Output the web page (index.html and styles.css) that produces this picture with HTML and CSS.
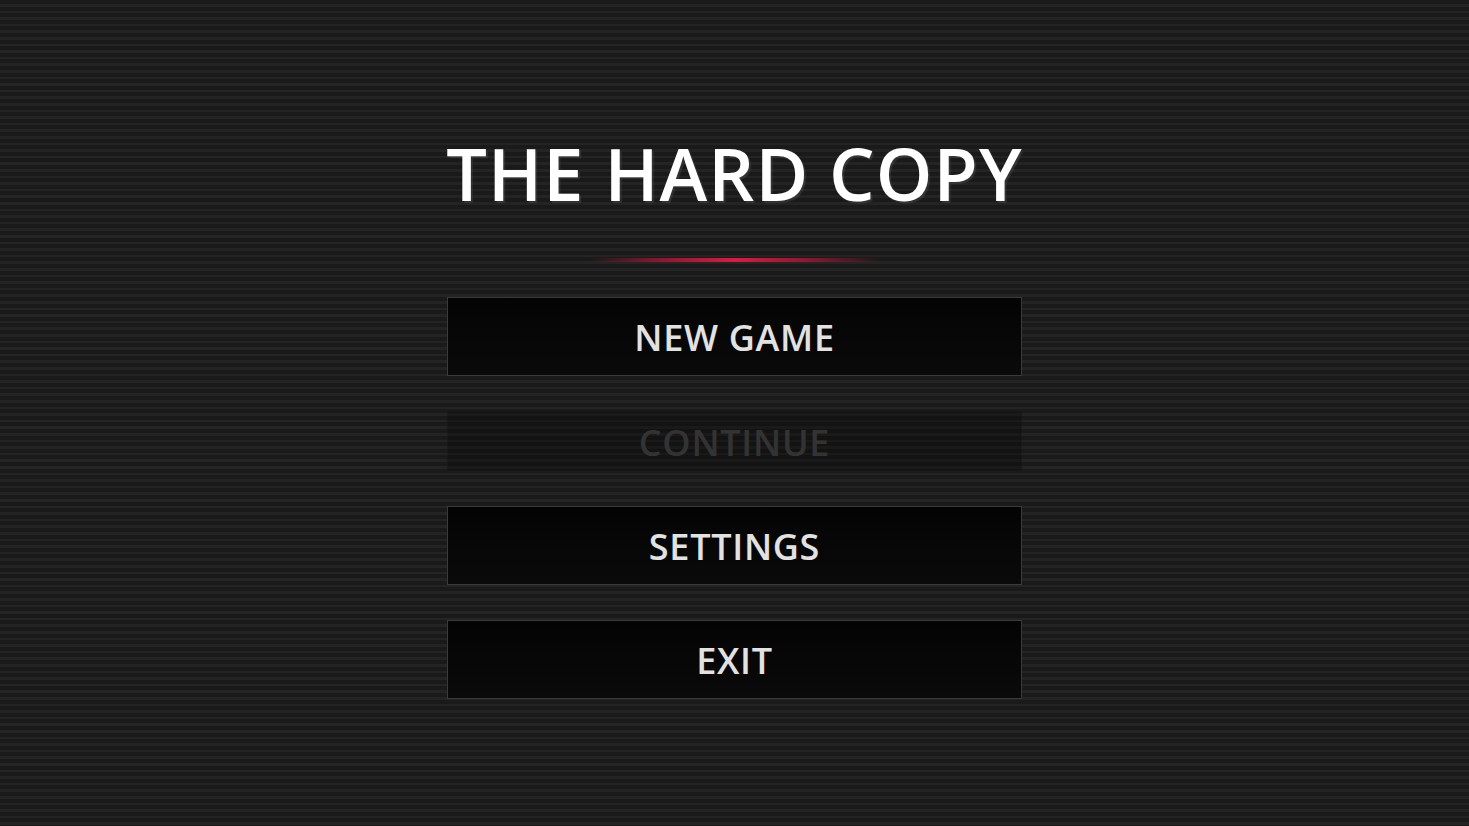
FILE: index.html
```html
<!DOCTYPE html>
<html>
<head>
<meta charset="utf-8">
<title>The Hard Copy</title>
<link rel="stylesheet" href="styles.css">
</head>
<body>
<main class="screen">
  <div class="menu">
    <h1 class="title">THE HARD COPY</h1>
    <div class="divider"></div>
    <nav class="buttons">
      <button class="btn">NEW GAME</button>
      <button class="btn btn-disabled" disabled>CONTINUE</button>
      <button class="btn">SETTINGS</button>
      <button class="btn">EXIT</button>
    </nav>
  </div>
</main>
</body>
</html>
```

FILE: styles.css
```css
html, body {
  margin: 0;
  padding: 0;
  height: 100%;
}
body {
  background-color: #1a1a1a;
  background-image: repeating-linear-gradient(to bottom, #1a1a1a 0px, #1a1a1a 4px, #242424 4px, #242424 6.6px);
  font-family: "Open Sans", "Liberation Sans", sans-serif;
  overflow: hidden;
}
.screen {
  height: 100vh;
  display: flex;
  align-items: center;
  justify-content: center;
}
.menu {
  width: 575px;
  padding-top: 10px;
  display: flex;
  flex-direction: column;
  align-items: center;
}
.title {
  margin: 0;
  font-size: 72px;
  font-weight: 600;
  letter-spacing: 1.1px;
  color: #ffffff;
  line-height: 1;
  text-shadow: 2px 2px 1px rgba(100,100,100,0.3);
  white-space: nowrap;
}
.divider {
  margin-top: 49px;
  width: 290px;
  height: 4px;
  background: linear-gradient(to right, rgba(220,20,60,0) 0%, rgba(220,20,60,0.6) 25%, #dc1a42 50%, rgba(220,20,60,0.6) 75%, rgba(220,20,60,0) 100%);
  border-radius: 2px;
}
.buttons {
  margin-top: 35px;
  width: 100%;
  display: flex;
  flex-direction: column;
}
.btn {
  width: 100%;
  height: 79px;
  box-sizing: border-box;
  background: linear-gradient(to bottom, #040404, #0a0a0a);
  border: 1px solid #3a3a3a;
  color: #e2e2e2;
  font-family: "Open Sans", "Liberation Sans", sans-serif;
  font-size: 36px;
  font-weight: 600;
  letter-spacing: 0.7px;
  padding: 2px 0 0 0;
  margin: 0;
}
.btn + .btn {
  margin-top: 35px;
}
.btn-disabled {
  height: 60px;
  background: rgba(10,10,10,0.35);
  border-color: rgba(40,40,40,0.2);
  color: #333333;
}
```
